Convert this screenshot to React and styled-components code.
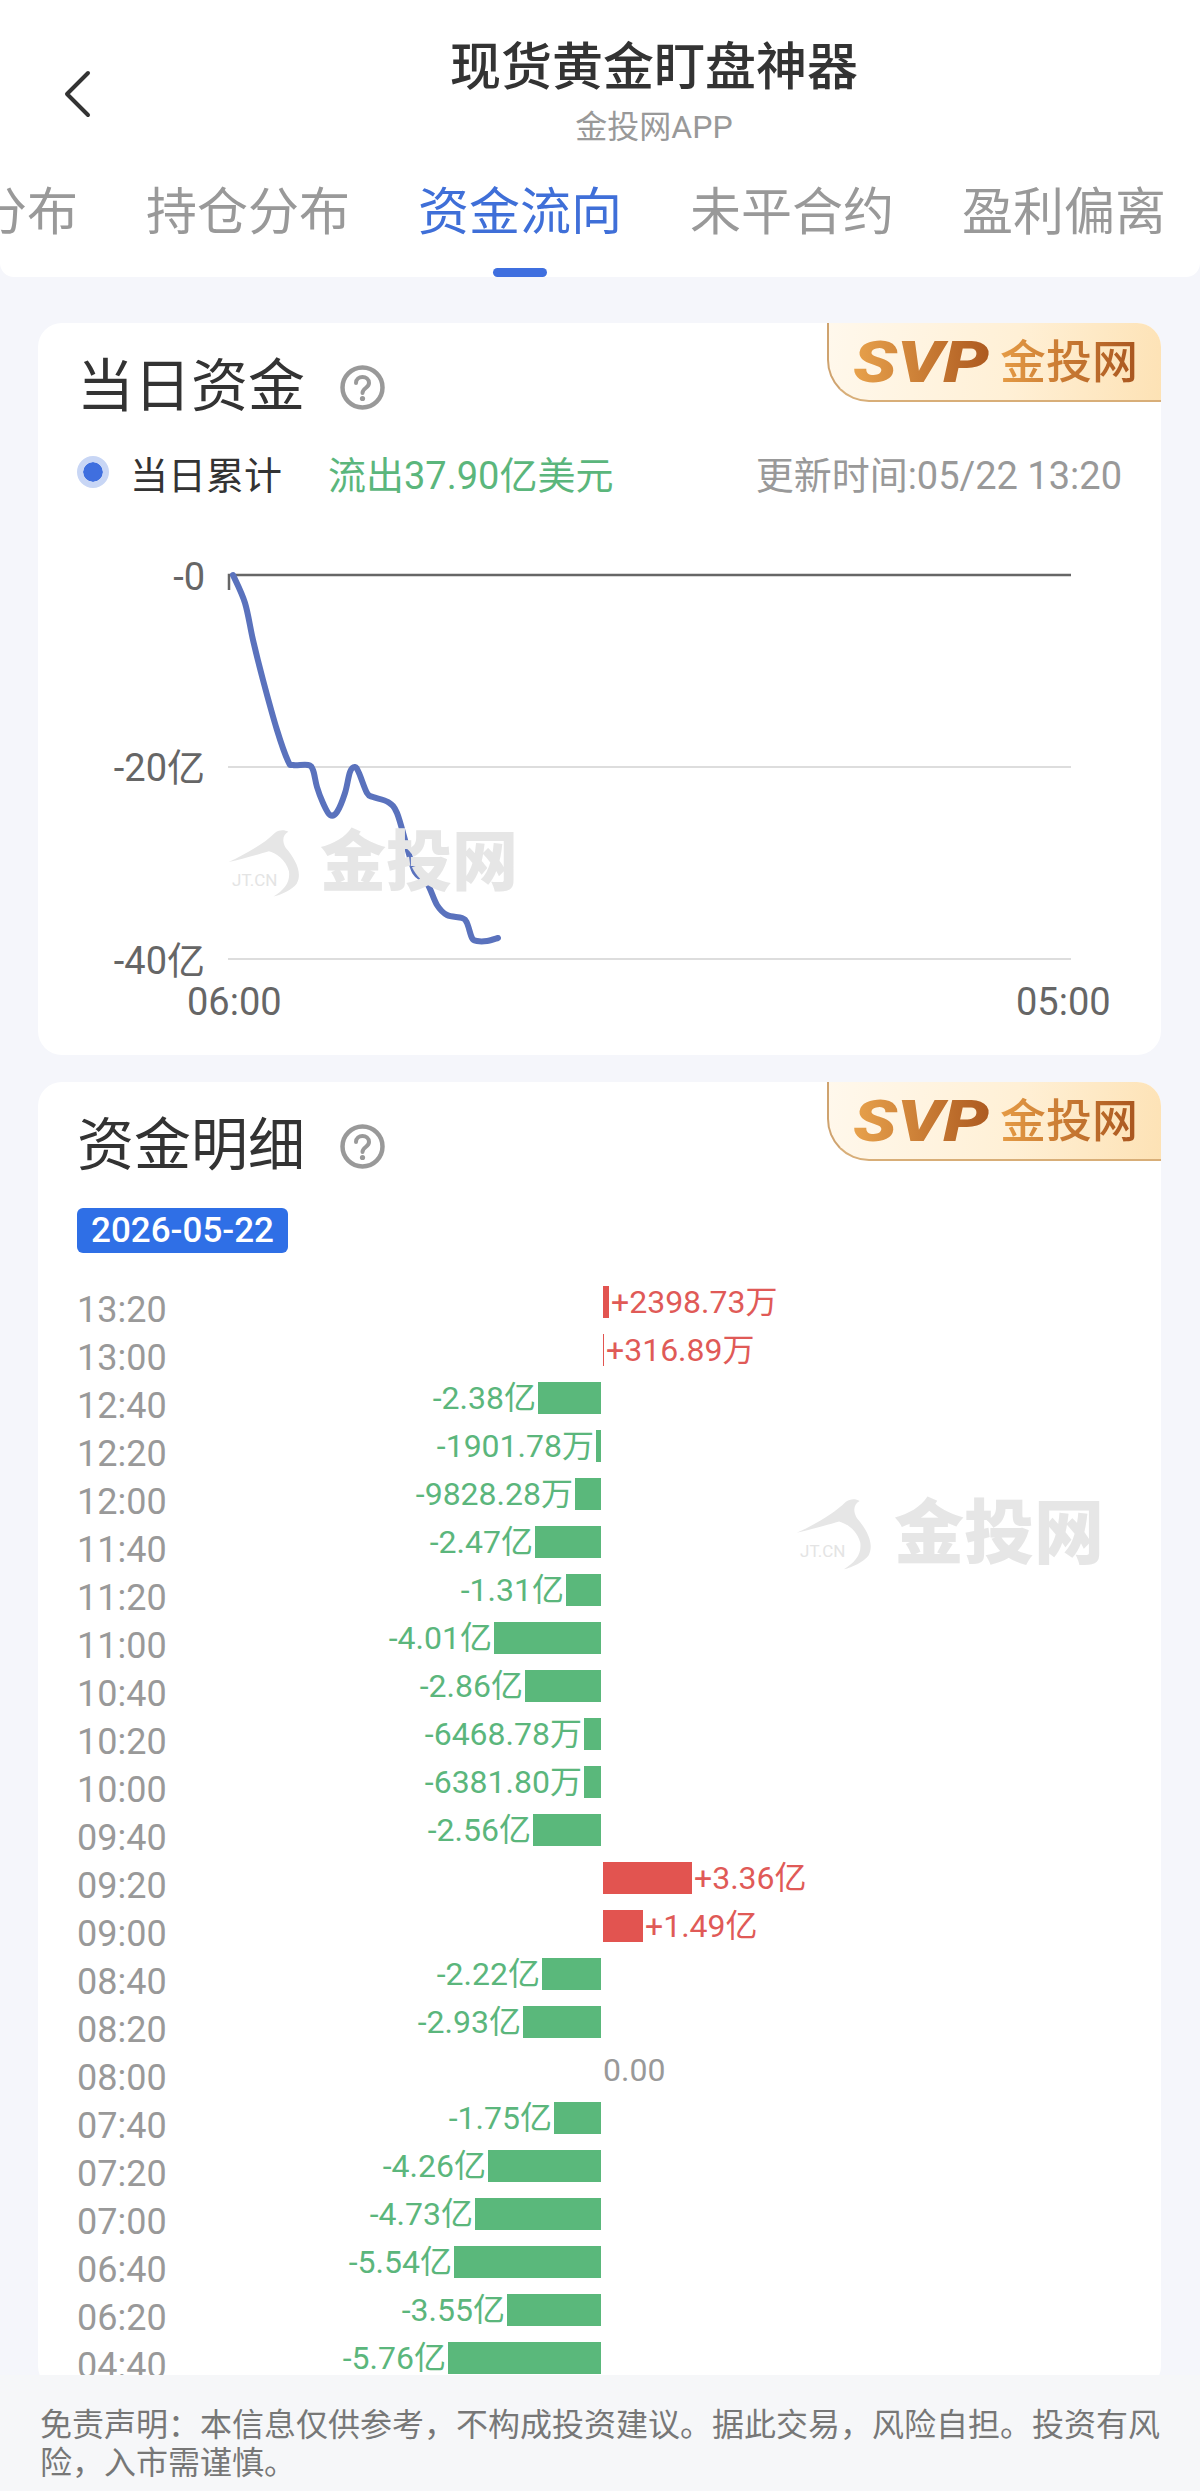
import React from 'react';
import styled, { createGlobalStyle } from 'styled-components';

const GlobalStyle = createGlobalStyle`
  html, body {
    margin: 0;
    padding: 0;
    background: #f5f6fb;
    font-family: Roboto, "Noto Sans CJK SC", sans-serif;
  }
`;

const Page = styled.div`
  width: 1200px;
  height: 2491px;
  display: flex;
  flex-direction: column;
  overflow: hidden;
  background: #f5f6fb;
`;

const Header = styled.header`
  flex: none;
  height: 277px;
  background: #fff;
  border-radius: 0 0 14px 14px;
  overflow: hidden;
`;

const TopBar = styled.div`
  height: 156px;
  display: flex;
  align-items: center;
`;

const BackButton = styled.div`
  width: 108px;
  flex: none;
  display: flex;
  padding-left: 62px;
  box-sizing: border-box;
  margin-top: 31px;
`;

const TitleBlock = styled.div`
  flex: 1;
  display: flex;
  flex-direction: column;
  align-items: center;
  padding-top: 26px;
`;

const Title = styled.div`
  font-size: 51px;
  line-height: 60px;
  font-weight: 500;
  color: #333;
  margin-top: 2px;
`;

const SubTitle = styled.div`
  font-size: 32px;
  line-height: 40px;
  color: #999;
  margin-top: 9px;
`;

const Tabs = styled.nav`
  display: flex;
  gap: 68px;
  margin-left: -126px;
  height: 121px;
`;

const Tab = styled.div`
  position: relative;
  flex: none;
  width: 204px;
  font-size: 51px;
  line-height: 114px;
  color: ${p => (p.$active ? '#3f6fd8' : '#999')};

  ${p => p.$active && `
    &::after {
      content: '';
      position: absolute;
      left: 75px;
      bottom: 0;
      width: 54px;
      height: 9px;
      border-radius: 5px;
      background: #3f6fdf;
    }
  `}
`;

const Main = styled.main`
  flex: 1;
  min-height: 0;
  overflow: hidden;
  padding: 46px 39px 0 38px;
  display: flex;
  flex-direction: column;
  gap: 27px;
`;

const Card = styled.section`
  position: relative;
  flex: none;
  background: #fff;
  border-radius: 24px;
`;

const CardHead = styled.div`
  display: flex;
  align-items: center;
  height: 128px;
  padding-left: 39px;
  gap: 35px;
`;

const CardTitle = styled.h2`
  margin: 0;
  font-size: 57px;
  line-height: 64px;
  font-weight: 400;
  color: #333;
`;

const Badge = styled.div`
  position: absolute;
  top: 0;
  right: 0;
  width: 334px;
  height: 79px;
  box-sizing: border-box;
  border-left: 2px solid #cfa36f;
  border-bottom: 2px solid #d8ae78;
  border-radius: 0 24px 0 42px;
  background: linear-gradient(100deg, #fff8ec 0%, #fff0d6 55%, #fde2b5 100%);
  display: flex;
  align-items: center;
  padding-left: 24px;
  gap: 7px;
`;

const LogoMark = styled.svg`
  flex: none;
  overflow: visible;
`;

const BadgeText = styled.span`
  font-size: 46px;
  line-height: 60px;
  font-weight: 500;
  background: linear-gradient(90deg, #e59b45, #a9561f);
  -webkit-background-clip: text;
  background-clip: text;
  color: transparent;
`;

const Legend = styled.div`
  display: flex;
  align-items: center;
  height: 40px;
  margin-top: 1px;
  padding: 0 39px;
  font-size: 38px;
`;

const LegendDot = styled.span`
  flex: none;
  width: 20px;
  height: 20px;
  border: 6px solid #c8d6f5;
  border-radius: 50%;
  background: #3f6fdf;
  background-clip: padding-box;
`;

const LegendName = styled.span`
  margin-left: 21px;
  color: #333;
`;

const LegendValue = styled.span`
  margin-left: 46px;
  color: #5bb67c;
`;

const LegendTime = styled.span`
  margin-left: auto;
  color: #999;
`;

const ChartBox = styled.div`
  position: relative;
  height: 525px;
  margin-top: 38px;

  svg.plot {
    display: block;
  }
`;

const Watermark = styled.div`
  position: absolute;
  left: ${p => p.$left}px;
  top: ${p => p.$top}px;
  display: flex;
  align-items: center;
  gap: ${p => p.$gap}px;
  pointer-events: none;
`;

const WatermarkBird = styled.div`
  position: relative;
  width: ${p => p.$size}px;
  height: ${p => p.$size * 0.94}px;

  span {
    position: absolute;
    left: 4px;
    top: 60%;
    font-size: 17px;
    line-height: 20px;
    color: #e4e4e4;
  }
`;

const WatermarkText = styled.span`
  font-size: ${p => p.$size}px;
  line-height: 1;
  font-weight: 900;
  color: #e6e6e6;
`;

const DateTag = styled.div`
  width: 211px;
  height: 45px;
  margin: -2px 0 0 39px;
  border-radius: 6px;
  background: #2f6fe6;
  color: #fff;
  font-size: 35px;
  font-weight: 500;
  line-height: 45px;
  text-align: center;
`;

const Rows = styled.div`
  margin-top: 33px;
  padding-left: 39px;
`;

const Row = styled.div`
  display: flex;
  height: 48px;
  align-items: flex-start;
`;

const TimeCell = styled.div`
  flex: none;
  width: 150px;
  font-size: 36px;
  line-height: 48px;
  color: #999;
`;

const NegSide = styled.div`
  flex: none;
  width: 374px;
  display: flex;
  justify-content: flex-end;
  align-items: center;
  height: 32px;
  gap: 2px;
`;

const PosSide = styled.div`
  flex: 1;
  margin-left: 2px;
  display: flex;
  align-items: center;
  height: 32px;
  gap: 2px;
`;

const Bar = styled.span`
  flex: none;
  height: 32px;
  background: ${p => (p.$up ? '#e25450' : '#5ab87b')};
`;

const Value = styled.span`
  font-size: 32px;
  line-height: 32px;
  white-space: nowrap;
  color: ${p => (p.$zero ? '#999' : p.$up ? '#e05a57' : '#5bb67c')};
`;

const Footer = styled.footer`
  flex: none;
  height: 116px;
  box-sizing: border-box;
  padding: 31px 40px 0;
  background: #f6f7f9;
  font-size: 32px;
  line-height: 38px;
  color: #777;
`;

const Chevron = () => (
  <svg width="30" height="48" viewBox="0 0 30 48" fill="none">
    <path d="M26 3 L5 24 L26 45" stroke="#333" strokeWidth="4" strokeLinecap="round" strokeLinejoin="round" />
  </svg>
);

const HelpIcon = () => (
  <svg width="45" height="45" viewBox="0 0 45 45" fill="none">
    <circle cx="22.5" cy="22.5" r="20" stroke="#999" strokeWidth="4.5" />
    <path d="M16 18 C16 10 29 10 29 18 C29 23 22.5 23 22.5 28" stroke="#999" strokeWidth="4" strokeLinecap="round" />
    <circle cx="22.5" cy="33.5" r="2.6" fill="#999" />
  </svg>
);

const GoldBadge = () => (
  <Badge>
    <LogoMark width="140" height="44" viewBox="0 0 140 44">
      <defs>
        <linearGradient id="svpGold" x1="0" x2="1" y1="0" y2="0">
          <stop offset="0" stopColor="#e8a24c" />
          <stop offset="1" stopColor="#ad5a20" />
        </linearGradient>
      </defs>
      <text
        x="0"
        y="42"
        fontFamily="Roboto, sans-serif"
        fontWeight="900"
        fontStyle="italic"
        fontSize="58"
        textLength="136"
        lengthAdjust="spacingAndGlyphs"
        fill="url(#svpGold)"
      >
        SVP
      </text>
    </LogoMark>
    <BadgeText>金投网</BadgeText>
  </Badge>
);

const BirdMark = ({ size }) => (
  <WatermarkBird $size={size}>
    <svg width={size} height={size * 0.94} viewBox="55 50 235 225">
      <path
        d="M55 160 C110 135 170 100 205 65 C220 55 235 55 248 62 C232 70 225 90 240 115 C270 150 295 195 275 230 C260 250 225 265 200 272 C235 250 255 225 250 190 C240 150 205 130 185 125 C150 135 100 150 55 160 Z"
        fill="#e6e6e6"
      />
    </svg>
    <span>JT.CN</span>
  </WatermarkBird>
);

// points read off the reference, page coordinates
const LINE = [
  [233, 575], [245, 603], [253, 640], [263, 680], [277, 730], [288, 761], [293, 765], [308, 765],
  [313, 770], [317, 787], [323, 803], [330, 815], [337, 812], [345, 793], [350, 772], [355, 767],
  [359, 773], [367, 793], [373, 797], [388, 802], [397, 813], [407, 847], [415, 872], [427, 883],
  [437, 905], [447, 915], [462, 918], [467, 923], [472, 938], [477, 941], [487, 941], [498, 938]
];

const smoothPath = pts => {
  let d = `M${pts[0][0]} ${pts[0][1]}`;
  for (let i = 0; i < pts.length - 1; i++) {
    const p0 = pts[i - 1] || pts[i];
    const p1 = pts[i];
    const p2 = pts[i + 1];
    const p3 = pts[i + 2] || p2;
    const c1x = p1[0] + (p2[0] - p0[0]) / 6;
    const c1y = p1[1] + (p2[1] - p0[1]) / 6;
    const c2x = p2[0] - (p3[0] - p1[0]) / 6;
    const c2y = p2[1] - (p3[1] - p1[1]) / 6;
    d += ` C${c1x} ${c1y} ${c2x} ${c2y} ${p2[0]} ${p2[1]}`;
  }
  return d;
};

const AXIS_LABELS = [
  ['-0', 576],
  ['-20亿', 767],
  ['-40亿', 960]
];

const DayChart = () => (
  <ChartBox>
    <Watermark $left={190} $top={298} $gap={18}>
      <BirdMark size={74} />
      <WatermarkText $size={66}>金投网</WatermarkText>
    </Watermark>
    <svg className="plot" width="1123" height="525" viewBox="38 530 1123 525">
      <line x1="228" x2="1071" y1="767" y2="767" stroke="#ddd" strokeWidth="2" />
      <line x1="228" x2="1071" y1="959" y2="959" stroke="#ddd" strokeWidth="2" />
      <path d="M229 590 V575 H1071" fill="none" stroke="#666" strokeWidth="2.5" />
      <path d={smoothPath(LINE)} fill="none" stroke="#5a72bd" strokeWidth="6" strokeLinecap="round" strokeLinejoin="round" />
      {AXIS_LABELS.map(([label, y]) => (
        <text key={label} x="205" y={y + 14} textAnchor="end" fontSize="38" fill="#666">{label}</text>
      ))}
      <text x="187" y="1015" fontSize="38" fill="#666">06:00</text>
      <text x="1016" y="1015" fontSize="38" fill="#666">05:00</text>
    </svg>
  </ChartBox>
);

// value in 亿, text as shown
const DETAILS = [
  ['13:20', 0.24, '+2398.73万'],
  ['13:00', 0.03, '+316.89万'],
  ['12:40', -2.38, '-2.38亿'],
  ['12:20', -0.19, '-1901.78万'],
  ['12:00', -0.98, '-9828.28万'],
  ['11:40', -2.47, '-2.47亿'],
  ['11:20', -1.31, '-1.31亿'],
  ['11:00', -4.01, '-4.01亿'],
  ['10:40', -2.86, '-2.86亿'],
  ['10:20', -0.65, '-6468.78万'],
  ['10:00', -0.64, '-6381.80万'],
  ['09:40', -2.56, '-2.56亿'],
  ['09:20', 3.36, '+3.36亿'],
  ['09:00', 1.49, '+1.49亿'],
  ['08:40', -2.22, '-2.22亿'],
  ['08:20', -2.93, '-2.93亿'],
  ['08:00', 0, '0.00'],
  ['07:40', -1.75, '-1.75亿'],
  ['07:20', -4.26, '-4.26亿'],
  ['07:00', -4.73, '-4.73亿'],
  ['06:40', -5.54, '-5.54亿'],
  ['06:20', -3.55, '-3.55亿'],
  ['04:40', -5.76, '-5.76亿']
];

const PX_PER_YI = 26.6;

const DetailRow = ({ time, amount, text }) => {
  const width = Math.max(1, Math.round(Math.abs(amount) * PX_PER_YI));
  return (
    <Row>
      <TimeCell>{time}</TimeCell>
      <NegSide>
        {amount < 0 && (
          <>
            <Value>{text}</Value>
            <Bar style={{ width }} />
          </>
        )}
      </NegSide>
      <PosSide>
        {amount > 0 && (
          <>
            <Bar $up style={{ width }} />
            <Value $up>{text}</Value>
          </>
        )}
        {amount === 0 && <Value $zero>{text}</Value>}
      </PosSide>
    </Row>
  );
};

const TABS = ['多空分布', '持仓分布', '资金流向', '未平合约', '盈利偏离'];

export default function App() {
  return (
    <Page>
      <GlobalStyle />
      <Header>
        <TopBar>
          <BackButton><Chevron /></BackButton>
          <TitleBlock>
            <Title>现货黄金盯盘神器</Title>
            <SubTitle>金投网APP</SubTitle>
          </TitleBlock>
        </TopBar>
        <Tabs>
          {TABS.map(tab => (
            <Tab key={tab} $active={tab === '资金流向'}>{tab}</Tab>
          ))}
        </Tabs>
      </Header>
      <Main>
        <Card>
          <GoldBadge />
          <CardHead>
            <CardTitle>当日资金</CardTitle>
            <HelpIcon />
          </CardHead>
          <Legend>
            <LegendDot />
            <LegendName>当日累计</LegendName>
            <LegendValue>流出37.90亿美元</LegendValue>
            <LegendTime>更新时间:05/22 13:20</LegendTime>
          </Legend>
          <DayChart />
        </Card>
        <Card>
          <GoldBadge />
          <Watermark $left={758} $top={415} $gap={20}>
            <BirdMark size={78} />
            <WatermarkText $size={70}>金投网</WatermarkText>
          </Watermark>
          <CardHead>
            <CardTitle>资金明细</CardTitle>
            <HelpIcon />
          </CardHead>
          <DateTag>2026-05-22</DateTag>
          <Rows>
            {DETAILS.map(([time, amount, text]) => (
              <DetailRow key={time} time={time} amount={amount} text={text} />
            ))}
          </Rows>
        </Card>
      </Main>
      <Footer>免责声明：本信息仅供参考，不构成投资建议。据此交易，风险自担。投资有风险，入市需谨慎。</Footer>
    </Page>
  );
}
